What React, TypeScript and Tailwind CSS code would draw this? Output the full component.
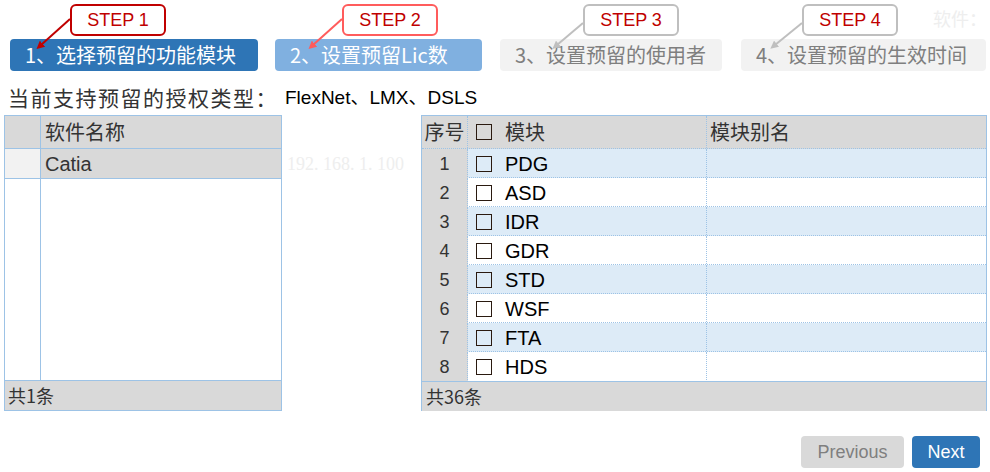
import React from 'react';

const cjk = '"Noto Sans CJK SC", "Liberation Sans", sans-serif';
const latin = '"Liberation Sans", "Noto Sans CJK SC", sans-serif';

const steps = [
  { label: 'STEP 1', text: '1、选择预留的功能模块', w: 'w-[248px]', ml: 'ml-[10px]', off: 'ml-[60px]', btn: 'bg-[#2e75b6] text-white', box: 'border-[#c00000]' },
  { label: 'STEP 2', text: '2、设置预留Lic数', w: 'w-[207px]', ml: 'ml-[17px]', off: 'ml-[67px]', btn: 'bg-[#80b0e0] text-white', box: 'border-[#ff5c5c]' },
  { label: 'STEP 3', text: '3、设置预留的使用者', w: 'w-[222px]', ml: 'ml-[18px]', off: 'ml-[83px]', btn: 'bg-[#f2f2f2] text-[#7f7f7f]', box: 'border-[#bfbfbf]' },
  { label: 'STEP 4', text: '4、设置预留的生效时间', w: 'w-[245px]', ml: 'ml-[19px]', off: 'ml-[61px]', btn: 'bg-[#f2f2f2] text-[#7f7f7f]', box: 'border-[#bfbfbf]' },
];

const modules = ['PDG', 'ASD', 'IDR', 'GDR', 'STD', 'WSF', 'FTA', 'HDS'];

function Arrows() {
  const arrows = [
    { x1: 70, y1: 19, x2: 41, y2: 45, c: '#c00000' },
    { x1: 342, y1: 19, x2: 313, y2: 45, c: '#ff5c5c' },
    { x1: 583, y1: 23, x2: 557, y2: 45, c: '#bfbfbf' },
    { x1: 802, y1: 23, x2: 775, y2: 45, c: '#bfbfbf' },
  ];
  return (
    <svg className="absolute left-0 top-0 pointer-events-none" width="990" height="80">
      <defs>
        {arrows.map((a, i) => (
          <marker key={i} id={`ah${i}`} markerWidth="8" markerHeight="8" refX="2" refY="4" orient="auto" markerUnits="userSpaceOnUse">
            <path d="M0,0 L8,4 L0,8 z" fill={a.c} />
          </marker>
        ))}
      </defs>
      {arrows.map((a, i) => (
        <line key={i} x1={a.x1} y1={a.y1} x2={a.x2} y2={a.y2} stroke={a.c} strokeWidth="2" markerEnd={`url(#ah${i})`} />
      ))}
    </svg>
  );
}

function Box() {
  return <span className="inline-block w-[16px] h-[16px] border border-[#2a1a10] shrink-0" />;
}

export default function App() {
  return (
    <div className="relative w-[990px] h-[472px] bg-white overflow-hidden" style={{ fontFamily: cjk }}>
      {/* faint watermark bits */}
      <div className="absolute left-[933px] top-[5px] text-[18px] text-[#eeeeee]">软件：</div>
      <div className="absolute left-[287px] top-[151px] text-[18px] text-[#eeeeee]" style={{ fontFamily: '"Liberation Serif", serif' }}>
        192. 168. 1. 100
      </div>

      {/* steps */}
      <div className="flex pt-[4px]">
        {steps.map((s) => (
          <div key={s.label} className={`${s.ml} ${s.w} flex flex-col`}>
            <div
              className={`${s.off} w-[96px] h-[32px] border-2 ${s.box} rounded-[6px] bg-white flex items-center justify-center text-[18px] text-[#c00000]`}
              style={{ fontFamily: latin }}
            >
              {s.label}
            </div>
            <div className={`mt-[3px] h-[32px] rounded-[4px] ${s.btn} flex items-center pl-[15px] text-[20px]`}>
              {s.text}
            </div>
          </div>
        ))}
      </div>
      <Arrows />

      {/* license types */}
      <div className="flex items-center h-[44px] pt-[10px] pl-[8px]">
        <span className="text-[21px] tracking-[1.5px] text-[#333]">当前支持预留的授权类型：</span>
        <span className="ml-[7px] text-[19px] text-black" style={{ fontFamily: latin }}>FlexNet、LMX、DSLS</span>
      </div>

      {/* tables */}
      <div className="flex pl-[4px]">
        {/* software table */}
        <div className="w-[278px] h-[296px] border border-[#9dc3e6] flex flex-col">
          <div className="h-[33px] border-b border-[#9dc3e6] bg-[#d9d9d9] flex shrink-0">
            <div className="w-[36px] border-r border-[#9dc3e6]" />
            <div className="pl-[4px] flex items-center text-[20px] text-[#333]">软件名称</div>
          </div>
          <div className="h-[30px] border-b border-[#9dc3e6] flex shrink-0">
            <div className="w-[36px] border-r border-[#9dc3e6] bg-[#f2f2f2]" />
            <div className="flex-1 bg-[#d9d9d9] pl-[4px] flex items-center text-[20px] text-[#333]" style={{ fontFamily: latin }}>
              Catia
            </div>
          </div>
          <div className="flex-1 flex">
            <div className="w-[36px] border-r border-[#9dc3e6]" />
          </div>
          <div className="h-[30px] border-t border-[#9dc3e6] bg-[#d9d9d9] pl-[3px] flex items-center text-[18px] text-[#333] shrink-0">
            共1条
          </div>
        </div>

        {/* module table */}
        <div className="ml-[139px] w-[566px] h-[296px] border border-[#9dc3e6] flex flex-col">
          <div className="h-[33px] border-b border-dotted border-[#9dc3e6] bg-[#d9d9d9] grid grid-cols-[46px_239px_1fr] shrink-0">
            <div className="border-r border-dotted border-[#9dc3e6] flex items-center justify-center text-[20px] text-[#333]">序号</div>
            <div className="border-r border-dotted border-[#9dc3e6] flex items-center pl-[8px] gap-[13px] text-[20px] text-[#333]">
              <Box />
              <span>模块</span>
            </div>
            <div className="flex items-center pl-[3px] text-[20px] text-[#333]">模块别名</div>
          </div>
          {modules.map((m, i) => (
            <div
              key={m}
              className={`h-[29px] grid grid-cols-[46px_239px_1fr] ${i < 7 ? 'border-b border-dotted border-[#9dc3e6]' : ''} ${i % 2 === 0 ? 'bg-[#ddebf7]' : 'bg-white'}`}
            >
              <div className="bg-[#d9d9d9] border-r border-dotted border-[#9dc3e6] flex items-center justify-center text-[18px] text-[#333]" style={{ fontFamily: latin }}>
                {i + 1}
              </div>
              <div className="border-r border-dotted border-[#9dc3e6] flex items-center pl-[8px] gap-[13px] text-[20px] text-black" style={{ fontFamily: latin }}>
                <Box />
                <span>{m}</span>
              </div>
              <div />
            </div>
          ))}
          <div className="h-[30px] border-t border-[#9dc3e6] bg-[#d9d9d9] pl-[4px] flex items-center text-[18px] text-[#333] shrink-0">
            共36条
          </div>
        </div>
      </div>

      {/* pager buttons */}
      <div className="flex justify-end gap-[8px] pr-[10px] mt-[25px]">
        <div className="w-[103px] h-[32px] rounded-[4px] bg-[#d9d9d9] text-[#7f7f7f] flex items-center justify-center text-[18px]" style={{ fontFamily: latin }}>
          Previous
        </div>
        <div className="w-[68px] h-[32px] rounded-[4px] bg-[#2e75b6] text-white flex items-center justify-center text-[18px]" style={{ fontFamily: latin }}>
          Next
        </div>
      </div>
    </div>
  );
}
